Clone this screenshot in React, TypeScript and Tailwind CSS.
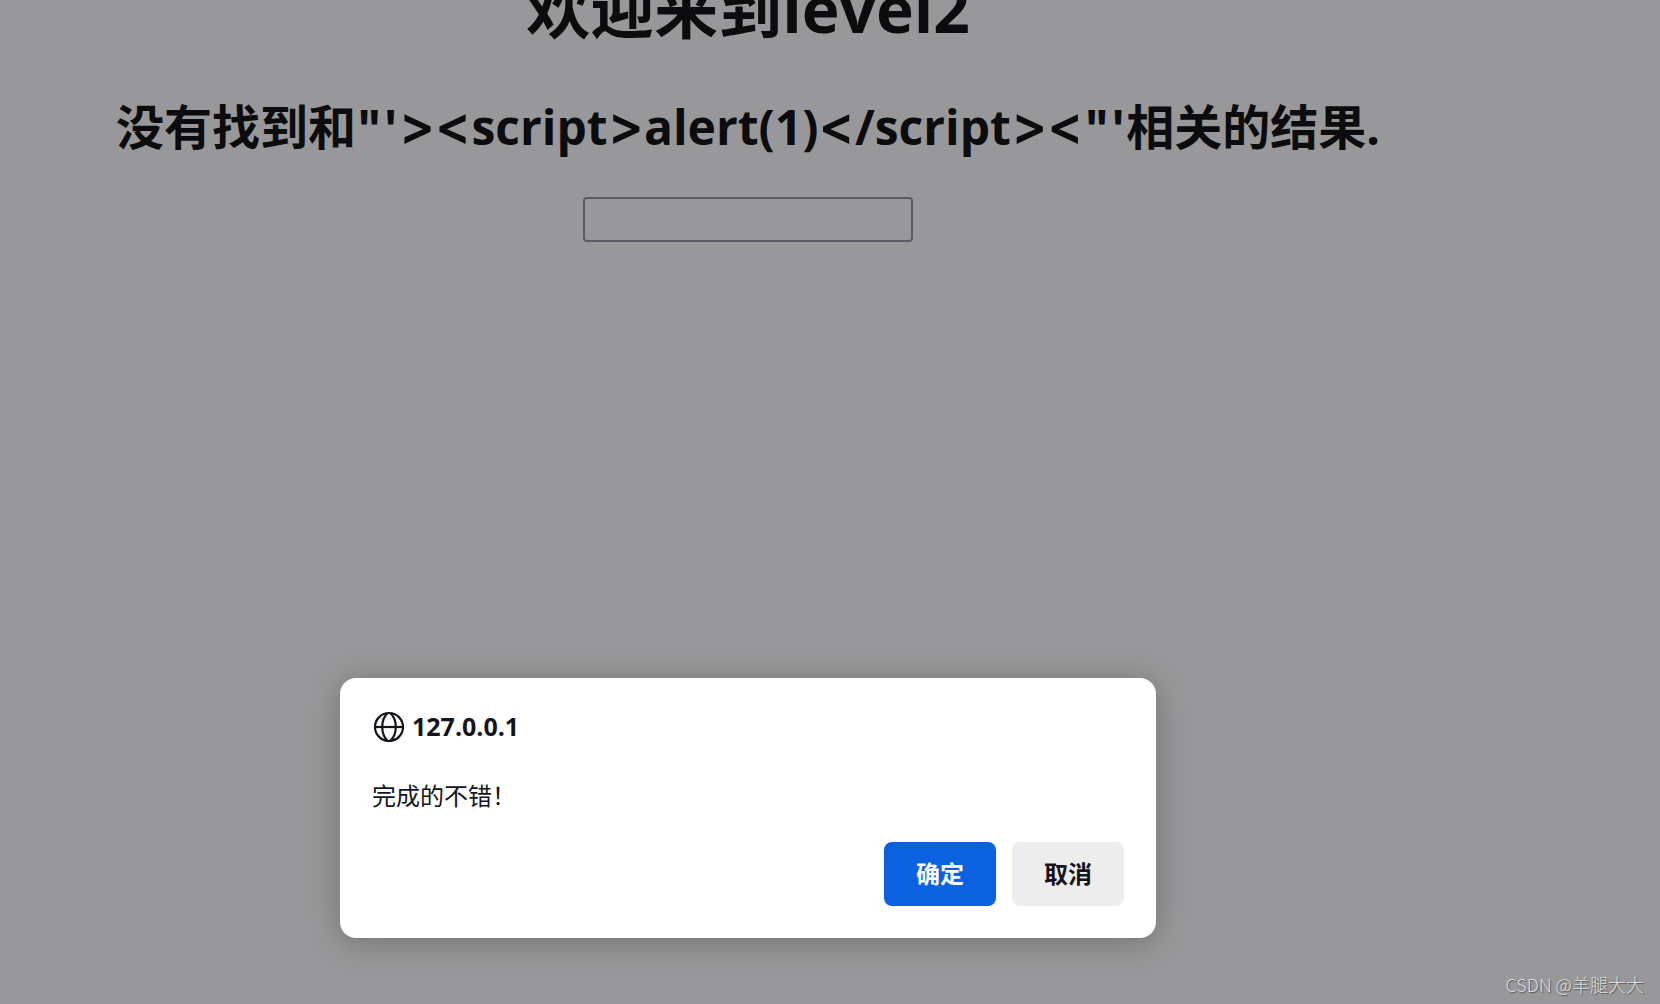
import React from "react";

const query = `"'><script>alert(1)</script><"'`;

function GlobeIcon() {
  return (
    <svg
      className="size-8 shrink-0"
      viewBox="0 0 32 32"
      fill="none"
      stroke="currentColor"
      strokeWidth="2.2"
      aria-hidden="true"
    >
      <circle cx="17" cy="17" r="14" />
      <path d="M3 17h28" />
      <path d="M15.5 3.3C8.5 9.5 8.5 24.5 15.5 30.7" />
      <path d="M18.5 3.3C25.5 9.5 25.5 24.5 18.5 30.7" />
    </svg>
  );
}

function Markup({ text }: { text: string }) {
  return (
    <>
      {text.split(/([<>]+|["']+)/).map((part, i) => {
        if (/[<>]/.test(part)) {
          return (
            <span
              key={i}
              className="font-['Inter',sans-serif] text-[54px] leading-none font-semibold"
            >
              {part}
            </span>
          );
        }
        if (/["']/.test(part)) {
          return (
            <span key={i} className="font-['Inter',sans-serif] leading-none">
              {part}
            </span>
          );
        }
        return part;
      })}
    </>
  );
}

function AlertDialog() {
  return (
    <section
      role="dialog"
      aria-labelledby="dialog-title"
      className="flex w-full max-w-[816px] flex-col rounded-2xl bg-white p-8 text-[#15141a] shadow-[0_4px_32px_rgba(0,0,0,0.25)]"
    >
      <div className="flex items-center gap-2">
        <GlobeIcon />
        <h3 id="dialog-title" className="text-[25px] leading-8 font-bold">
          127.0.0.1
        </h3>
      </div>
      <p className="mt-9 text-2xl leading-9">完成的不错！</p>
      <div className="mt-7 flex justify-end gap-4">
        <button className="h-16 rounded-lg bg-[#0b61e0] px-8 text-2xl font-bold text-[#fbfbfe]">
          确定
        </button>
        <button className="h-16 rounded-lg bg-[#ededed] px-8 text-2xl font-bold">
          取消
        </button>
      </div>
    </section>
  );
}

export default function App() {
  return (
    <div className="relative flex min-h-screen flex-col overflow-hidden bg-[#98989a] pr-41 font-['Open_Sans','Noto_Sans_CJK_SC',sans-serif] text-[#0c0c0e]">
      <main className="flex flex-1 flex-col items-center">
        <h1 className="-mt-8 text-[64px] leading-[82px] font-bold">
          欢迎来到level2
        </h1>
        <h2 className="mt-11 text-5xl leading-[65px] font-bold whitespace-nowrap">
          没有找到和
          <Markup text={query} />
          相关的结果.
        </h2>
        <input
          type="text"
          aria-label="keyword"
          className="mt-[38px] h-[45px] w-[330px] rounded border-2 border-[#5b5b66] bg-transparent px-1"
        />
      </main>
      <div className="flex justify-center pb-[66px]">
        <AlertDialog />
      </div>
      <p className="absolute right-4 bottom-2 font-['Noto_Sans_CJK_SC',sans-serif] text-lg leading-6 font-light text-[#dcdcdc] [text-shadow:1px_1px_1px_#555]">
        CSDN @羊腿大大
      </p>
    </div>
  );
}
